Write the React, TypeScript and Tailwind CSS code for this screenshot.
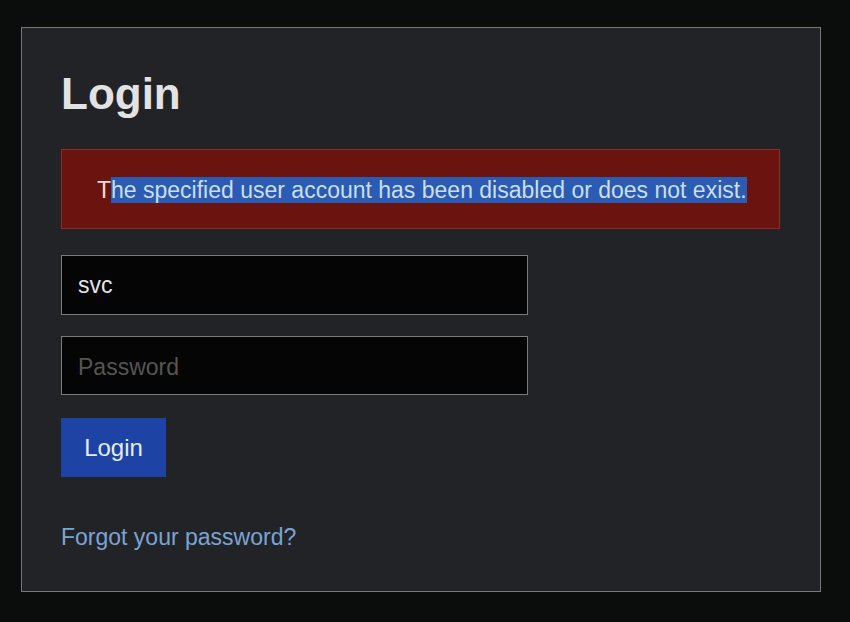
export default function App() {
  return (
    <div className="min-h-screen bg-[#0b0d0d] pl-[21px] pt-[27px] font-['Liberation_Sans',Arial,sans-serif]">
      <div className="flex h-[565px] w-[800px] flex-col border border-[#787878] bg-[#222326] pl-[39px] pr-[40px] pt-[44px]">
        <h1 className="text-[44px] font-bold leading-[44px] text-[#e2e2e2]">Login</h1>

        <div className="mt-[33px] whitespace-nowrap border border-[#8a2c2c] bg-[#6b130e] pb-[25px] pl-[35px] pt-[27px] text-[23px] leading-[26px] text-[#eedede]">
          <span>T</span>
          <span className="bg-[#2b5bb3] text-[#c9def2]">he specified user account has been disabled or does not exist.</span>
        </div>

        <div className="mt-[26px] flex h-[60px] w-[467px] items-center border border-[#7a7a7a] bg-[#050505] pl-[16px] pt-[1px] text-[23px] text-[#e4e4e4]">
          svc
        </div>
        <div className="mt-[21px] flex h-[59px] w-[467px] items-center border border-[#7a7a7a] bg-[#050505] pl-[16px] pt-[4px] text-[23px] text-[#555555]">
          Password
        </div>

        <button className="mt-[23px] flex h-[59px] w-[105px] items-center justify-center bg-[#1d43a4] text-[24px] text-[#e4ecf8]">
          Login
        </button>

        <a href="#" className="mt-[47px] w-fit text-[23px] leading-[26px] text-[#7ba3d6]">
          Forgot your password?
        </a>
      </div>
    </div>
  );
}
